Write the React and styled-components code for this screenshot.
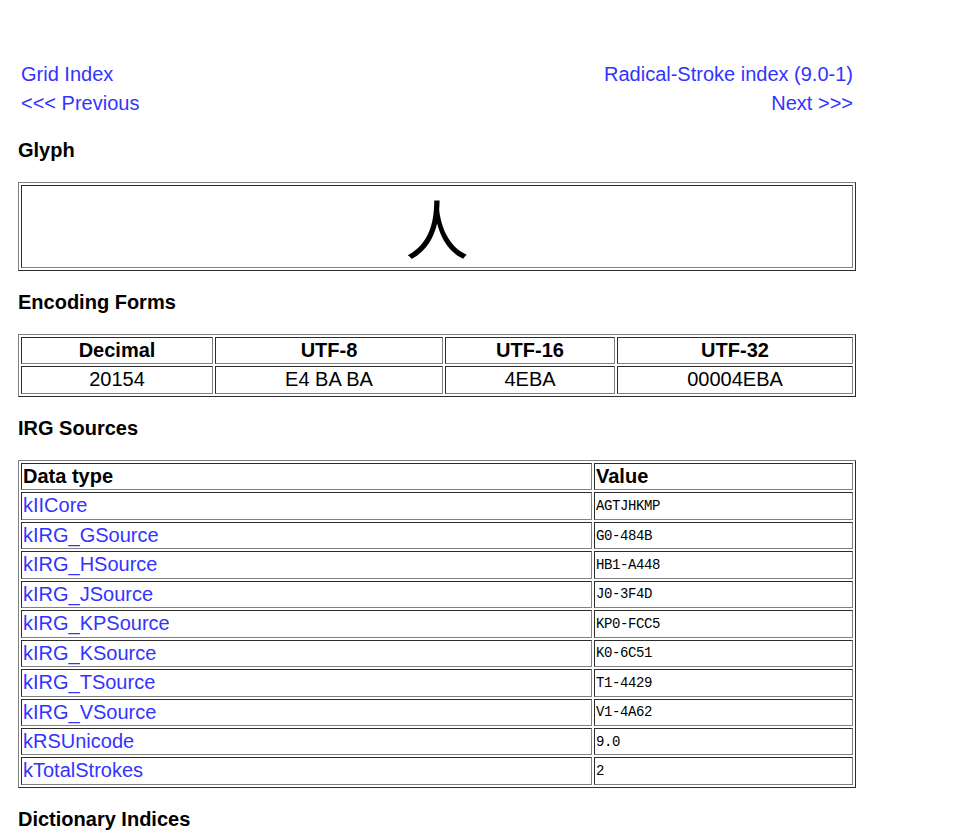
import styled, { createGlobalStyle } from "styled-components";

const GlobalStyle = createGlobalStyle`
  body {
    margin: 0;
    background: #fff;
    color: #000;
    font-family: "Liberation Sans", Arial, sans-serif;
    font-size: 20px;
  }
`;

const Page = styled.div`
  width: 838px;
  padding: 59px 0 0 18px;
`;

const NavTable = styled.table`
  width: 100%;
  border-spacing: 2px;
  border-collapse: separate;
`;

const NavCell = styled.td`
  padding: 2px 1px;
  line-height: 23px;
  text-align: ${(p) => p.$align || "left"};
`;

const Link = styled.a`
  color: #3333ff;
  text-decoration: none;
  cursor: pointer;
`;

const Heading = styled.div`
  margin: 20px 0;
  font-weight: bold;
  line-height: 23px;
`;

const Table = styled.table`
  width: 838px;
  box-sizing: border-box;
  border: 1px outset gray;
  border-spacing: 2px;
  border-collapse: separate;
  table-layout: fixed;
`;

const Cell = styled.td`
  box-sizing: border-box;
  width: ${(p) => (p.$w ? `${p.$w}px` : "auto")};
  border: 1px inset gray;
  padding: 1px;
  line-height: 23.45px;
  vertical-align: middle;
  text-align: ${(p) => p.$align || "left"};
  font-weight: ${(p) => (p.$bold ? "bold" : "normal")};
`;

const GlyphCell = styled(Cell)`
  font-family: "Noto Sans CJK SC", "Noto Sans CJK JP", sans-serif;
  font-size: 64px;
  line-height: 79px;
`;

const MonoCell = styled(Cell)`
  font-family: "Liberation Mono", "DejaVu Sans Mono", monospace;
  font-size: 14px;
  letter-spacing: -0.4px;
  line-height: 16px;
`;

const encoding = [
  { label: "Decimal", value: "20154", w: 192 },
  { label: "UTF-8", value: "E4 BA BA", w: 228 },
  { label: "UTF-16", value: "4EBA", w: 170 },
  { label: "UTF-32", value: "00004EBA", w: 236 },
];

const sources = [
  ["kIICore", "AGTJHKMP"],
  ["kIRG_GSource", "G0-484B"],
  ["kIRG_HSource", "HB1-A448"],
  ["kIRG_JSource", "J0-3F4D"],
  ["kIRG_KPSource", "KP0-FCC5"],
  ["kIRG_KSource", "K0-6C51"],
  ["kIRG_TSource", "T1-4429"],
  ["kIRG_VSource", "V1-4A62"],
  ["kRSUnicode", "9.0"],
  ["kTotalStrokes", "2"],
];

export default function App() {
  return (
    <>
      <GlobalStyle />
      <Page>
        <NavTable>
          <tbody>
            <tr>
              <NavCell>
                <Link>Grid Index</Link>
              </NavCell>
              <NavCell $align="right">
                <Link>Radical-Stroke index (9.0-1)</Link>
              </NavCell>
            </tr>
            <tr>
              <NavCell>
                <Link>&lt;&lt;&lt; Previous</Link>
              </NavCell>
              <NavCell $align="right">
                <Link>Next &gt;&gt;&gt;</Link>
              </NavCell>
            </tr>
          </tbody>
        </NavTable>

        <Heading>Glyph</Heading>
        <Table>
          <tbody>
            <tr>
              <GlyphCell $align="center">人</GlyphCell>
            </tr>
          </tbody>
        </Table>

        <Heading>Encoding Forms</Heading>
        <Table>
          <tbody>
            <tr>
              {encoding.map((e) => (
                <Cell key={e.label} $w={e.w} $align="center" $bold>
                  {e.label}
                </Cell>
              ))}
            </tr>
            <tr>
              {encoding.map((e) => (
                <Cell key={e.label} $align="center">
                  {e.value}
                </Cell>
              ))}
            </tr>
          </tbody>
        </Table>

        <Heading>IRG Sources</Heading>
        <Table>
          <tbody>
            <tr>
              <Cell $w={571} $bold>
                Data type
              </Cell>
              <Cell $w={259} $bold>
                Value
              </Cell>
            </tr>
            {sources.map(([key, val]) => (
              <tr key={key}>
                <Cell>
                  <Link>{key}</Link>
                </Cell>
                <MonoCell>{val}</MonoCell>
              </tr>
            ))}
          </tbody>
        </Table>

        <Heading>Dictionary Indices</Heading>
      </Page>
    </>
  );
}
